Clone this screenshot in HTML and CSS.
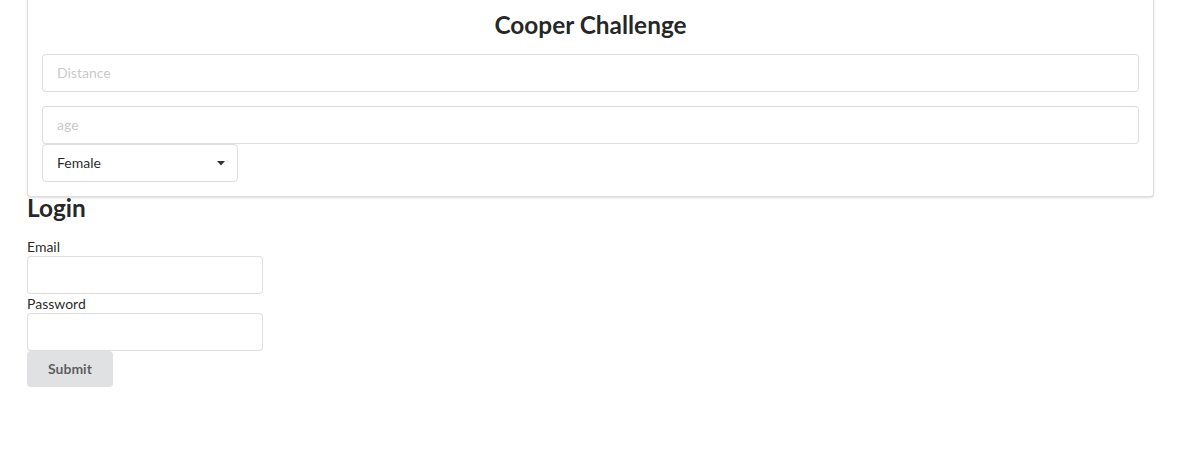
FILE: index.html
```html
<!DOCTYPE html>
<html>
<head>
<meta charset="utf-8">
<link rel="stylesheet" href="styles.css">
</head>
<body>
<div class="container">
  <div class="segment">
    <h2 class="title">Cooper Challenge</h2>
    <div class="field"><input class="input" type="text" placeholder="Distance"></div>
    <div class="field tight"><input class="input" type="text" placeholder="age"></div>
    <div class="dropdown">
      <span class="dd-text">Female</span>
      <svg class="caret" width="8" height="5" viewBox="0 0 8 5"><path d="M0 0 L8 0 L4 4.5 Z" fill="rgba(0,0,0,0.8)"/></svg>
    </div>
  </div>
  <h2 class="login-title">Login</h2>
  <form class="login">
    <label class="label">Email</label>
    <input class="input small" type="text">
    <label class="label">Password</label>
    <input class="input small" type="password">
    <button class="button" type="button">Submit</button>
  </form>
</div>
</body>
</html>
```
FILE: styles.css
```css
html, body {
  margin: 0;
  padding: 0;
  background: #fff;
  font-family: Lato, "Helvetica Neue", Arial, sans-serif;
  font-size: 14px;
  line-height: 1.4285em;
  color: rgba(0,0,0,0.87);
}
.container {
  width: 1127px;
  margin-left: 27px;
}
.segment {
  margin-top: -6px;
  background: #fff;
  border: 1px solid rgba(34,36,38,0.15);
  border-radius: 4px;
  box-shadow: 0 1px 2px 0 rgba(34,36,38,0.15);
  padding: 14px;
  display: flex;
  flex-direction: column;
}
.title {
  margin: 0 0 14px;
  font-size: 24.4px;
  line-height: 31px;
  font-weight: 700;
  text-align: center;
}
.field {
  margin-bottom: 14px;
}
.field.tight {
  margin-bottom: 0;
}
.input {
  display: block;
  box-sizing: border-box;
  width: 100%;
  height: 38px;
  font-family: Lato, "Helvetica Neue", Arial, sans-serif;
  font-size: 14px;
  line-height: 17px;
  padding: 9px 14px 10px;
  border: 1px solid rgba(34,36,38,0.15);
  border-radius: 4px;
  color: rgba(0,0,0,0.87);
  background: #fff;
  outline: none;
  margin: 0;
}
.input::placeholder {
  color: rgba(191,191,191,0.87);
}
.dropdown {
  box-sizing: border-box;
  width: 196px;
  height: 38px;
  border: 1px solid rgba(34,36,38,0.15);
  border-radius: 4px;
  padding: 0 12px 0 14px;
  display: flex;
  align-items: center;
  justify-content: space-between;
}
.dd-text {
  font-size: 14px;
}
.caret {
  display: block;
  margin-top: 1px;
}
.login-title {
  margin: -5px 0 14px;
  font-size: 24.4px;
  line-height: 31px;
  font-weight: 700;
}
.login {
  display: flex;
  flex-direction: column;
  align-items: flex-start;
}
.label {
  font-size: 14px;
  line-height: 20px;
  height: 19px;
}
.input.small {
  width: 236px;
}
.button {
  margin-top: 0;
  font-family: Lato, "Helvetica Neue", Arial, sans-serif;
  font-size: 14px;
  font-weight: 700;
  line-height: 1em;
  padding: 11px 21px;
  background: #e0e1e2;
  color: rgba(0,0,0,0.6);
  border: none;
  border-radius: 4px;
}
```
